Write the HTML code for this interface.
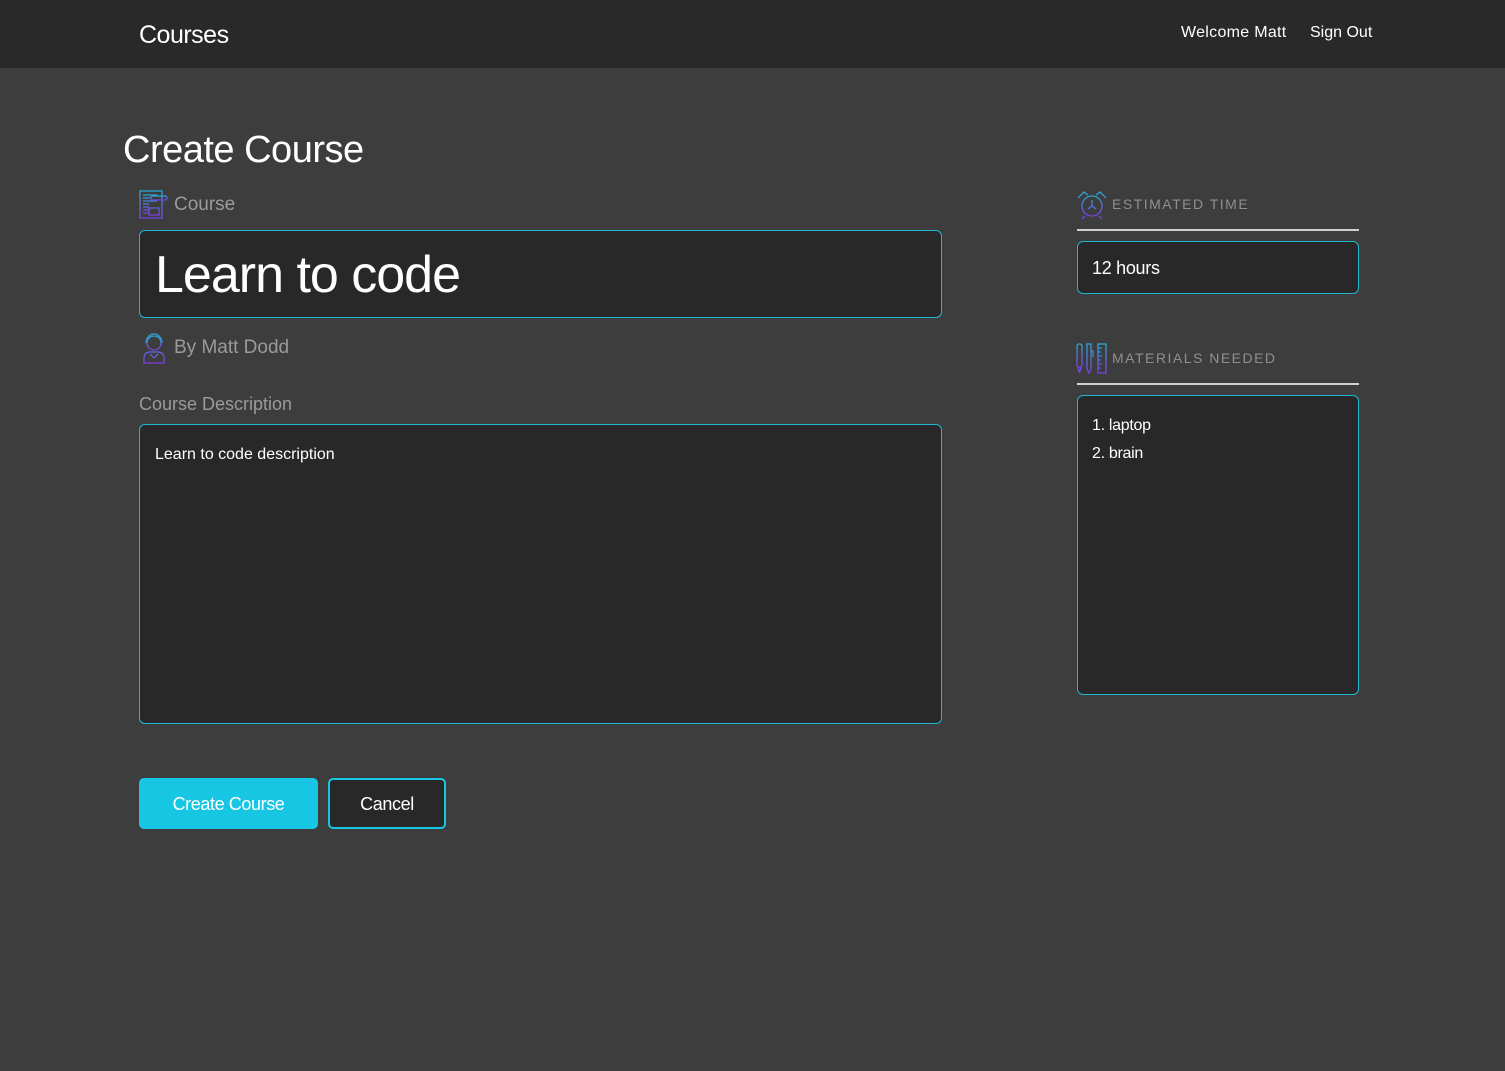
<!DOCTYPE html>
<html><head><meta charset="utf-8"><style>
*{box-sizing:border-box;margin:0;padding:0}
body{width:1505px;height:1071px;background:#3d3d3d;font-family:"Liberation Sans",sans-serif;color:#fff;position:relative;overflow:hidden}
.hdr{position:absolute;left:0;top:0;width:1505px;height:68px;background:#292929}
.abs{position:absolute}
.box{position:absolute;background:#282828;border:1px solid #1fb6d2;border-radius:6px}
.lbl{color:#9a9a9a}
.cap{color:#8f8f8f;font-size:14px;letter-spacing:1.5px}
.line{position:absolute;height:2px;background:#cfcfcf}
</style></head><body>
<div class="hdr"></div>
<div class="abs" style="left:139px;top:21px;font-size:25px;letter-spacing:-0.5px">Courses</div>
<div class="abs" style="left:1181px;top:24px;font-size:16px;letter-spacing:0.3px">Welcome Matt</div>
<div class="abs" style="left:1310px;top:24px;font-size:16px">Sign Out</div>
<div class="abs" style="left:123px;top:129px;font-size:38px;letter-spacing:-0.5px">Create Course</div>

<svg class="abs" style="left:139px;top:190px" width="30" height="30" viewBox="0 0 30 30" fill="none" stroke-width="1.3"><defs><linearGradient id="g" x1="0" y1="0" x2="0" y2="1"><stop offset="0" stop-color="#2aa7d6"/><stop offset="1" stop-color="#7b3fe0"/></linearGradient></defs><g stroke="url(#g)"><rect x="1" y="1" width="22" height="27"/><path d="M4 5h14M4 8h8M4 11h14M4 14h6M4 17h6M4 20h6M4 23h6M10 18h10v7H10z"/><rect x="12" y="6" width="16" height="4" rx="2"/></g></svg>
<div class="abs lbl" style="left:174px;top:194px;font-size:19px">Course</div>
<div class="box" style="left:139px;top:230px;width:803px;height:88px"></div>
<div class="abs" style="left:155px;top:245px;font-size:52px;letter-spacing:-1px">Learn to code</div>

<svg class="abs" style="left:142px;top:332px" width="24" height="32" viewBox="0 0 24 32" fill="none" stroke="url(#g)" stroke-width="1.3"><circle cx="12" cy="11" r="7"/><path d="M4 11a8 9 0 0 1 16 0M2 31v-6a6 5 0 0 1 6-5h8a6 5 0 0 1 6 5v6zM8 22l4 4 4-4"/></svg>
<div class="abs lbl" style="left:174px;top:337px;font-size:19px">By Matt Dodd</div>
<div class="abs lbl" style="left:139px;top:394px;font-size:18px">Course Description</div>
<div class="box" style="left:139px;top:424px;width:803px;height:300px"></div>
<div class="abs" style="left:155px;top:446px;font-size:16px">Learn to code description</div>

<div class="abs" style="left:139px;top:778px;width:179px;height:51px;background:#17c6e3;border-radius:5px;font-size:18px;text-align:center;line-height:53px;letter-spacing:-0.4px">Create Course</div>
<div class="abs" style="left:328px;top:778px;width:118px;height:51px;background:#282828;border:2px solid #17c6e3;border-radius:5px;font-size:18px;text-align:center;line-height:49px;letter-spacing:-0.4px">Cancel</div>

<svg class="abs" style="left:1077px;top:190px" width="30" height="30" viewBox="0 0 30 30" fill="none" stroke="url(#g)" stroke-width="1.3"><circle cx="15" cy="16" r="10"/><path d="M1 8l6-6 4 3M29 8l-6-6-4 3M15 10v6l-4 3M15 16l4 3M8 26l-3 3M22 26l3 3"/></svg>
<div class="abs cap" style="left:1112px;top:196px">ESTIMATED TIME</div>
<div class="line" style="left:1077px;top:229px;width:282px"></div>
<div class="box" style="left:1077px;top:241px;width:282px;height:53px"></div>
<div class="abs" style="left:1092px;top:258px;font-size:18px;letter-spacing:-0.3px">12 hours</div>

<svg class="abs" style="left:1076px;top:343px" width="32" height="32" viewBox="0 0 32 32" fill="none" stroke="url(#g)" stroke-width="1.3"><rect x="1" y="1" width="5" height="23" rx="2"/><path d="M2 24l1.5 6 1.5-6M11 1h4v25l-2 4-2-4zM15 8h2v6"/><rect x="22" y="1" width="8" height="29"/><path d="M22 5h4M22 9h3M22 13h4M22 17h3M22 21h4M22 25h3"/></svg>
<div class="abs cap" style="left:1112px;top:350px">MATERIALS NEEDED</div>
<div class="line" style="left:1077px;top:383px;width:282px"></div>
<div class="box" style="left:1077px;top:395px;width:282px;height:300px"></div>
<div class="abs" style="left:1092px;top:412px;font-size:16px;line-height:28px;letter-spacing:-0.3px">1. laptop<br>2. brain</div>
</body></html>
